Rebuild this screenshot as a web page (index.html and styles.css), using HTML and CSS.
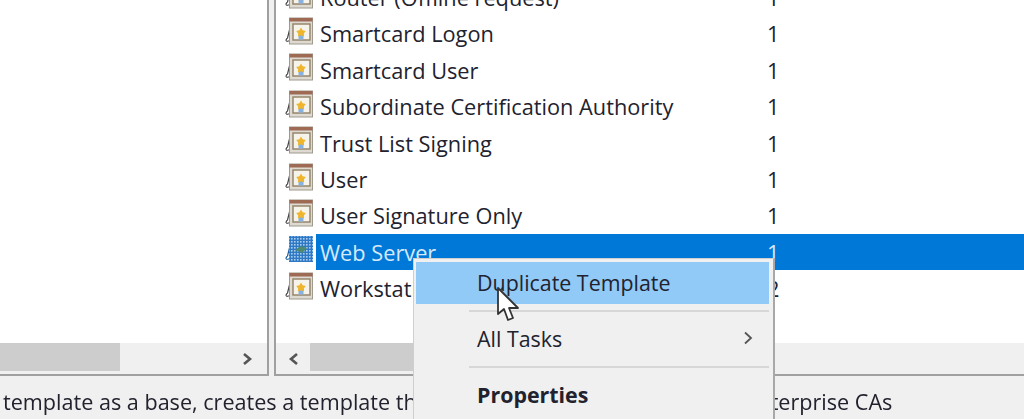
FILE: index.html
```html
<!DOCTYPE html>
<html>
<head>
	<meta charset="utf-8">
	<title>Certificate Templates</title>
	<link rel="stylesheet" href="styles.css">
</head>
<body>

<svg class="defs" width="0" height="0">
	<defs>
		<pattern id="dither" width="3" height="3" patternUnits="userSpaceOnUse">
			<rect width="3" height="3" fill="#2f78c4"/>
			<rect width="1.600" height="1.600" fill="#a9cdf0"/>
		</pattern>
		<symbol id="tpl" viewBox="0 0 28 28">
			<path d="M1.500 24c-1-.5 0-2.500 1-3l2-8M1.500 24.500l4-1" fill="none" stroke="#444" stroke-width="1.200"/>
			<rect x="4.500" y="1" width="23" height="26" fill="#dedad2" stroke="#a09a8e"/>
			<rect x="4.500" y="1" width="23" height="3.500" fill="#9e6a54"/>
			<rect x="8" y="7" width="17" height="16" fill="#f6f4ea" stroke="#97866c" stroke-width="1.500"/>
			<path d="M13.500 16h5v6.500h-5z" fill="#86b2e2"/>
			<path d="M16 10.500l1.600 2.700 3.200.8-2 2.500.3 3-3.100-1.200-3.100 1.200.3-3-2-2.500 3.200-.8z" fill="#efb52c"/>
		</symbol>
		<symbol id="tpl-selected" viewBox="0 0 28 28">
			<path d="M1.500 24c-1-.5 0-2.500 1-3l2-8M1.500 24.500l4-1" fill="none" stroke="#1c5f9e" stroke-width="1.200"/>
			<rect x="4" y="1" width="24" height="26" fill="url(#dither)"/>
			<path d="M10 15l6-4 6 2-5 5z" fill="#4d8a70"/>
		</symbol>
	</defs>
</svg>

<div class="panes">
	<div class="pane pane-left">
		<div class="pane-body"></div>
		<div class="hscroll">
			<div class="thumb thumb-left"></div>
			<div class="scroll-space"></div>
			<span class="chev chev-right-bar"><svg width="14" height="14" viewBox="0 0 14 14"><path d="M3 2l6 5-6 5" fill="none" stroke="#555" stroke-width="2.600"/></svg></span>
		</div>
	</div>

	<div class="pane pane-right">
		<div class="pane-body">
			<ul class="list">
				<li class="row"><svg class="ico"><use href="#tpl"/></svg><div class="row-body"><span class="name">Router (Offline request)</span><span class="num">1</span></div></li>
				<li class="row"><svg class="ico"><use href="#tpl"/></svg><div class="row-body"><span class="name">Smartcard Logon</span><span class="num">1</span></div></li>
				<li class="row"><svg class="ico"><use href="#tpl"/></svg><div class="row-body"><span class="name">Smartcard User</span><span class="num">1</span></div></li>
				<li class="row"><svg class="ico"><use href="#tpl"/></svg><div class="row-body"><span class="name">Subordinate Certification Authority</span><span class="num">1</span></div></li>
				<li class="row"><svg class="ico"><use href="#tpl"/></svg><div class="row-body"><span class="name">Trust List Signing</span><span class="num">1</span></div></li>
				<li class="row"><svg class="ico"><use href="#tpl"/></svg><div class="row-body"><span class="name">User</span><span class="num">1</span></div></li>
				<li class="row"><svg class="ico"><use href="#tpl"/></svg><div class="row-body"><span class="name">User Signature Only</span><span class="num">1</span></div></li>
				<li class="row selected"><svg class="ico"><use href="#tpl-selected"/></svg><div class="row-body"><span class="name">Web Server</span><span class="num">1</span></div></li>
				<li class="row"><svg class="ico"><use href="#tpl"/></svg><div class="row-body"><span class="name">Workstation Authentication</span><span class="num">2</span></div></li>
			</ul>
		</div>
		<div class="hscroll">
			<span class="chev chev-left-bar"><svg width="14" height="14" viewBox="0 0 14 14"><path d="M11 2L5 7l6 5" fill="none" stroke="#555" stroke-width="2.600"/></svg></span>
			<div class="thumb thumb-right"></div>
		</div>
	</div>
</div>

<div class="status">template as a base, creates a template that can be used in Windows 2003 Enterprise CAs</div>

<div class="menu">
	<div class="menu-item hover">Duplicate Template</div>
	<div class="menu-sep"></div>
	<div class="menu-item">All Tasks<svg class="menu-arrow" width="12" height="16" viewBox="0 0 12 16"><path d="M3 2.500l6 5.500-6 5.500" fill="none" stroke="#555" stroke-width="1.800"/></svg></div>
	<div class="menu-sep menu-sep-low"></div>
	<div class="menu-item bold">Properties</div>
</div>

<svg class="cursor" width="26" height="36" viewBox="0 0 26 36">
	<path d="M2 1v26l6-5 4 11 5-2-4-10h9z" fill="#fff" stroke="#333" stroke-width="1.800" stroke-linejoin="round"/>
</svg>

</body>
</html>
```

FILE: styles.css
```css
html, body {
	margin: 0;
	height: 419px;
	overflow: hidden;
}

body {
	position: relative;
	background: #f0f0f0;
	color: #22222e;
	font: 21.75px/36px 'Open Sans', sans-serif;
	filter: blur(0.6px);
}

.defs {
	display: block;
}

.panes {
	display: flex;
	gap: 5px;
	height: 376px;
}

.pane {
	display: flex;
	flex-direction: column;
	border-bottom: 2px solid #a0a0a0;
}

.pane-left {
	width: 269px;
	flex: none;
	box-sizing: border-box;
	border-right: 2px solid #a0a0a0;
}

.pane-right {
	flex: 1;
	min-width: 0;
	border-left: 2px solid #a0a0a0;
}

.pane-body {
	flex: 1;
	min-height: 0;
	background: #fff;
	overflow: hidden;
}

/* scrollbars */
.hscroll {
	display: flex;
	align-items: center;
	height: 31px;
	background: #f0f0f0;
}

.thumb {
	height: 28px;
	background: #cdcdcd;
	align-self: flex-start;
}

.thumb-left {
	width: 120px;
}

.thumb-right {
	width: 300px;
}

.scroll-space {
	flex: 1;
}

.chev {
	display: flex;
}

.chev-right-bar {
	margin-right: 12px;
}

.chev-left-bar {
	margin: 0 10px 0 10px;
}

/* list */
.list {
	list-style: none;
	margin: -21px 0 0;
	padding: 0;
}

.row {
	display: flex;
	align-items: center;
	height: 36.4px;
	padding-left: 9px;
}

.ico {
	width: 28px;
	height: 28px;
	flex: none;
	margin: 0 3px 5px 0;
}

.row-body {
	flex: 1;
	display: flex;
	height: 100%;
	padding-left: 4px;
	line-height: 37px;
	white-space: nowrap;
}

.name {
	width: 447px;
	flex: none;
}

.selected .row-body {
	background: #0078d7;
	color: #d5e9fa;
}

/* status bar */
.status {
	padding-left: 3px;
	font-size: 21.6px;
	line-height: 52px;
	white-space: nowrap;
}

/* context menu */
.menu {
	position: absolute;
	left: 413px;
	top: 258px;
	width: 362px;
	height: 180px;
	box-sizing: border-box;
	padding: 3px 4px 0 2px;
	font-size: 21.4px;
	background: #f0f0f0;
	border: 1px solid #cfcfcf;
	border-right: 2px solid #a8a8a8;
}

.menu-item {
	position: relative;
	height: 41px;
	line-height: 41px;
	padding-left: 61px;
}

.hover {
	height: 42px;
	background: #91c9f7;
}

.bold {
	font-weight: 700;
}

.menu-sep {
	height: 2px;
	margin: 6px 0 6px 53px;
	background: #d7d7d7;
}

.menu-sep-low {
	margin-top: 7px;
}

.menu-arrow {
	position: absolute;
	right: 15px;
	top: 12px;
}

.cursor {
	position: absolute;
	left: 496px;
	top: 287px;
}
```
